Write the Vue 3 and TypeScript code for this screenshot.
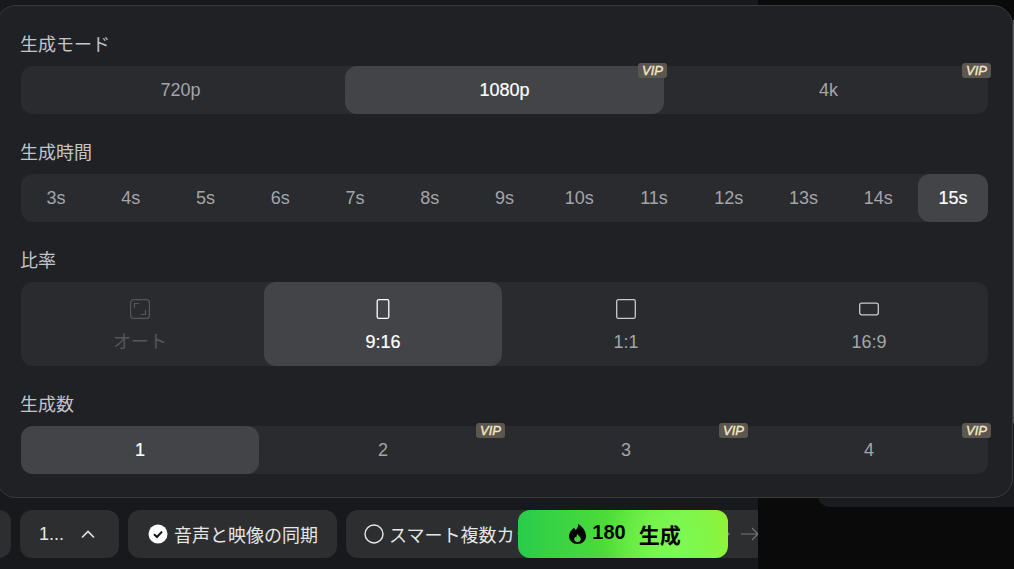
<template>
  <div class="page">
    <div class="stage">
      <div class="bar">
        <div class="chip chip-cut"></div>
        <div class="chip chip-select">
          <span>1...</span>
          <svg width="16" height="16" viewBox="0 0 16 16" fill="none">
            <path d="M2 11.500L8 5.500l6 6" stroke="#e4e4e4" stroke-width="1.600" />
          </svg>
        </div>
        <div class="chip">
          <svg width="20" height="20" viewBox="0 0 20 20">
            <circle cx="10" cy="10" r="9.500" fill="#fff" />
            <path d="M6 10.200l3 2.800 5-5.400" fill="none" stroke="#111" stroke-width="2" />
          </svg>
          <span>音声と映像の同期</span>
        </div>
        <div class="chip chip-wide">
          <svg width="20" height="20" viewBox="0 0 20 20">
            <circle cx="10" cy="10" r="9" fill="none" stroke="#e8e8e8" stroke-width="1.400" />
          </svg>
          <span>スマート複数カット</span>
          <svg class="arrow arrow-back" width="18" height="14" viewBox="0 0 18 14" fill="none">
            <path d="M0 7h17M11 1l6 6-6 6" stroke="#77787b" stroke-width="1.100" />
          </svg>
          <svg class="arrow" width="18" height="14" viewBox="0 0 18 14" fill="none">
            <path d="M0 7h17M11 1l6 6-6 6" stroke="#77787b" stroke-width="1.100" />
          </svg>
        </div>
        <button class="generate">
          <svg width="17" height="20" viewBox="0 0 17 20">
            <path
              fill-rule="evenodd"
              d="M9 0c.6 3-1 4.600-2.400 6C6 5.400 5.500 4.700 5.200 3.800 2.200 6 0 8.800 0 12c0 4.500 3.700 8 8.500 8S17 16.500 17 12c0-4.600-3.300-9.400-8-12zM8.600 10c.2 1.600 3.200 2.600 3.200 5 0 1.900-1.500 3-3.300 3s-3.300-1.200-3.300-3c0-1 .5-1.700 1.100-2.300.3.500.6.800 1 1 .1-1.500.3-2.700 1.300-3.700z"
            />
          </svg>
          <span class="cost">180</span>
          <span class="go">生成</span>
        </button>
      </div>
    </div>
    <div class="side">
      <div class="side-card"></div>
    </div>

    <div class="panel">
      <section class="group">
        <h3>生成モード</h3>
        <div class="seg seg-3">
          <div v-for="q in qualities" :key="q.label" class="item" :class="{ on: q.on }">
            {{ q.label }}
            <em v-if="q.vip" class="vip">VIP</em>
          </div>
        </div>
      </section>

      <section class="group">
        <h3>生成時間</h3>
        <div class="seg seg-13">
          <div v-for="s in seconds" :key="s" class="item" :class="{ on: s === 15 }">{{ s }}s</div>
        </div>
      </section>

      <section class="group">
        <h3>比率</h3>
        <div class="seg seg-4 tall">
          <div class="item stack off">
            <svg width="20" height="20" viewBox="0 0 20 20" fill="none" stroke="currentColor" stroke-width="1.200">
              <rect x=".6" y=".6" width="18.800" height="18.800" rx="3" />
              <path d="M4.500 9V4.500H9M15.500 11v4.500H11" />
            </svg>
            <span>オート</span>
          </div>
          <div class="item stack on">
            <svg width="20" height="20" viewBox="0 0 20 20" fill="none" stroke="currentColor" stroke-width="1.300">
              <rect x="4.200" y=".7" width="11.600" height="18.600" rx="1.500" />
            </svg>
            <span>9:16</span>
          </div>
          <div class="item stack">
            <svg width="20" height="20" viewBox="0 0 20 20" fill="none" stroke="currentColor" stroke-width="1.300">
              <rect x=".7" y=".7" width="18.600" height="18.600" rx="1.500" />
            </svg>
            <span>1:1</span>
          </div>
          <div class="item stack">
            <svg width="20" height="20" viewBox="0 0 20 20" fill="none" stroke="currentColor" stroke-width="1.300">
              <rect x=".7" y="4.200" width="18.600" height="11.600" rx="2" />
            </svg>
            <span>16:9</span>
          </div>
        </div>
      </section>

      <section class="group">
        <h3>生成数</h3>
        <div class="seg seg-4">
          <div v-for="n in counts" :key="n" class="item" :class="{ on: n === 1 }">
            {{ n }}
            <em v-if="n > 1" class="vip">VIP</em>
          </div>
        </div>
      </section>
    </div>
  </div>
</template>

<script setup lang="ts">
const qualities = [
  { label: '720p', on: false, vip: false },
  { label: '1080p', on: true, vip: true },
  { label: '4k', on: false, vip: true },
]
const seconds = [3, 4, 5, 6, 7, 8, 9, 10, 11, 12, 13, 14, 15]
const counts = [1, 2, 3, 4]
</script>

<style>
html,
body {
  background: #0a0a0a;
}
</style>

<style scoped>
.page {
  position: relative;
  display: flex;
  width: 1014px;
  height: 569px;
  overflow: hidden;
  background: #0a0a0a;
  font-family: "Liberation Sans", "Noto Sans CJK JP", sans-serif;
}

.stage {
  display: flex;
  flex-direction: column;
  justify-content: flex-end;
  width: 758px;
  flex: none;
  background: #18191c;
  overflow: hidden;
}

.bar {
  position: relative;
  display: flex;
  gap: 9px;
  height: 48px;
  margin-bottom: 11px;
  margin-left: -29px;
}

.chip {
  display: flex;
  flex: none;
  align-items: center;
  gap: 6px;
  height: 48px;
  padding: 0 19px 0 20px;
  box-sizing: border-box;
  border-radius: 12px;
  background: #2c2e30;
  color: #e6e6e6;
  font-size: 18px;
  white-space: nowrap;
}

.chip-cut {
  width: 40px;
}

.chip-select {
  width: 99px;
  gap: 16px;
  padding-left: 19px;
}

.chip-wide {
  position: relative;
  width: 440px;
  padding-left: 18px;
  gap: 5px;
}

.arrow {
  position: absolute;
  left: 395px;
  top: 17px;
}

.arrow-back {
  left: 366px;
}

.generate {
  position: absolute;
  left: 547px;
  top: 0;
  display: flex;
  align-items: center;
  justify-content: center;
  gap: 6px;
  width: 210px;
  height: 48px;
  padding: 0 0 0 4px;
  border: none;
  border-radius: 12px;
  background: radial-gradient(circle at 75% 75%, #7cfb52 0%, rgba(124, 251, 82, 0) 45%),
    linear-gradient(90deg, #2acb4c 0%, #4fdd37 45%, #7af04a 75%, #97ef2e 100%);
  color: #000;
  font-family: inherit;
}

.generate svg {
  margin-top: -1px;
}

.cost {
  font-size: 20px;
  font-weight: 700;
  line-height: 1;
  margin-top: -4px;
}

.go {
  margin-left: 7px;
  font-size: 21px;
  font-weight: 700;
  line-height: 1;
  margin-top: 3px;
}

.side {
  flex: 1;
  padding: 20px 0 0 60px;
}

.side-card {
  position: relative;
  height: 487px;
  margin-right: -20px;
  border-radius: 12px;
  background: #1b1c1f;
}

.side-card::after {
  content: "";
  position: absolute;
  left: 195px;
  top: 0;
  width: 1px;
  height: 403px;
  background: #55565a;
}

.panel {
  position: absolute;
  left: -4px;
  top: 5px;
  width: 1017px;
  height: 493px;
  box-sizing: border-box;
  padding: 26px 24px 0;
  border: 1px solid #38393d;
  border-radius: 20px;
  background: #202125;
}

.group {
  margin-bottom: 26px;
}

h3 {
  margin: 0 0 10px -1px;
  height: 24px;
  color: #c4c5c8;
  font-size: 18px;
  font-weight: 400;
  line-height: 26px;
}

.seg {
  display: grid;
  gap: 5px;
  border-radius: 12px;
  background: #2a2b2f;
}

.seg-3 {
  grid-template-columns: repeat(3, 1fr);
}

.seg-4 {
  grid-template-columns: repeat(4, 1fr);
}

.seg-13 {
  grid-template-columns: repeat(13, 1fr);
}

.item {
  position: relative;
  display: flex;
  align-items: center;
  justify-content: center;
  height: 48px;
  border-radius: 12px;
  color: #a3a5a9;
  font-size: 18px;
}

.item.on {
  background: #434448;
  color: #fff;
  -webkit-text-stroke: 0.2px #fff;
}

.tall .item {
  height: 84px;
}

.stack {
  flex-direction: column;
  justify-content: flex-start;
  gap: 11px;
  padding-top: 17px;
  box-sizing: border-box;
  line-height: 24px;
}

.stack svg {
  color: #c9cacc;
}

.stack.on svg {
  color: #fff;
}

.stack.off,
.stack.off svg {
  color: #55565a;
}

.vip {
  position: absolute;
  top: -3px;
  right: -3px;
  width: 29px;
  height: 15px;
  border-radius: 3px;
  background: #5b574f;
  color: #f5e8c8;
  font-size: 13px;
  font-weight: 400;
  font-style: italic;
  line-height: 15px;
  text-align: center;
  -webkit-text-stroke: 0.35px #f5e8c8;
}
</style>
